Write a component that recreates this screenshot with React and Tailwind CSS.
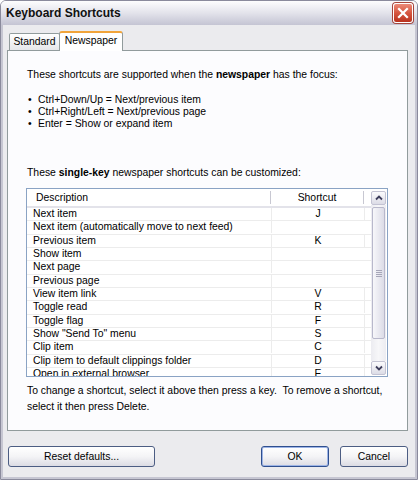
import { useState } from "react";

const rows = [
  ["Next item", "J"],
  ["Next item (automatically move to next feed)", ""],
  ["Previous item", "K"],
  ["Show item", ""],
  ["Next page", ""],
  ["Previous page", ""],
  ["View item link", "V"],
  ["Toggle read", "R"],
  ["Toggle flag", "F"],
  ['Show "Send To" menu', "S"],
  ["Clip item", "C"],
  ["Clip item to default clippings folder", "D"],
  ["Open in external browser", "E"],
];

function CloseButton() {
  return (
    <div className="flex h-[20px] w-[20px] items-center justify-center rounded-[3px] border border-white bg-linear-to-b from-[#ec8a78] via-[#d5553f] to-[#b9311d] shadow-[0_0_0_1px_#a5463c]">
      <svg width="12" height="12" viewBox="0 0 12 12">
        <path d="M2 2 L10 10 M10 2 L2 10" stroke="white" strokeWidth="2.2" strokeLinecap="square" />
      </svg>
    </div>
  );
}

function ScrollButton({ up }) {
  return (
    <div className="flex h-[14px] items-center justify-center rounded-[2px] border border-[#c3c3d3] bg-linear-to-b from-[#fbfbfd] to-[#dcdce6]">
      <svg width="8" height="6" viewBox="0 0 8 6">
        <path
          d={up ? "M1 4.5 L4 1.5 L7 4.5" : "M1 1.5 L4 4.5 L7 1.5"}
          stroke="#3e3e5c"
          strokeWidth="1.8"
          fill="none"
        />
      </svg>
    </div>
  );
}

function Button({ children, className, primary }) {
  return (
    <button
      className={`${className} h-[21px] rounded-[3px] border ${
        primary ? "border-[#2f4f8f] shadow-[inset_0_0_0_1px_#9db4e6]" : "border-[#4c5d83]"
      } bg-linear-to-b from-white via-[#f4f4f6] to-[#dcdce4] text-[10.4px] text-black`}
    >
      {children}
    </button>
  );
}

export default function App() {
  const [tab, setTab] = useState("newspaper");

  return (
    <div className="flex h-[480px] w-[418px] flex-col overflow-hidden rounded-t-[6px] border border-[#8a8a9c] font-['Liberation_Sans',Arial,sans-serif] text-black">
      <div className="flex h-[24px] items-center justify-between bg-linear-to-b from-[#fdfdfe] via-[#e3e3eb] to-[#c4c4d3] pl-[5px] pr-[4px]">
        <span className="text-[12px] font-bold text-[#111]">Keyboard Shortcuts</span>
        <CloseButton />
      </div>

      <div className="flex flex-1 flex-col border-x-[2px] border-b-[2px] border-[#c6c6d2] bg-[#ebebee] pl-[4px] pt-[6px]">
        <div className="flex items-end pl-[2px]">
          <div
            onClick={() => setTab("standard")}
            className="flex h-[17px] w-[51px] items-center justify-center rounded-t-[2px] border border-b-0 border-[#919b9c] bg-linear-to-b from-white to-[#e6e6ea] text-[10.4px]"
          >
            Standard
          </div>
          <div
            onClick={() => setTab("newspaper")}
            className="relative z-10 -mb-px -ml-px flex h-[20px] w-[64px] items-center justify-center rounded-t-[3px] border border-b-0 border-t-[2px] border-[#919b9c] border-t-[#f1a43a] bg-white pb-[2px] text-[10.4px]"
          >
            Newspaper
          </div>
        </div>

        <div className="flex h-[381px] w-[401px] flex-col border border-[#919b9c] bg-[#fcfcfe] px-[19px] pt-[18px] text-[10.4px] leading-[12px]">
          <p>
            These shortcuts are supported when the <b>newspaper</b> has the focus:
          </p>
          <ul className="mt-[13px]">
            <li className="flex"><span className="w-[11px] pl-[1px]">•</span>Ctrl+Down/Up = Next/previous item</li>
            <li className="flex"><span className="w-[11px] pl-[1px]">•</span>Ctrl+Right/Left = Next/previous page</li>
            <li className="flex"><span className="w-[11px] pl-[1px]">•</span>Enter = Show or expand item</li>
          </ul>
          <p className="mt-[37px]">
            These <b>single-key</b> newspaper shortcuts can be customized:
          </p>

          <div className="mt-[9px] flex h-[189px] w-[362px] -ml-px border border-[#8aa3c4] bg-white">
            <div className="flex-1 overflow-hidden">
              <div className="flex h-[19px] items-center border-b-[2px] border-[#e3e3ea] bg-white">
                <div className="w-[243px] pl-[9px]">Description</div>
                <div className="h-[13px] w-px bg-[#c8c8d2]" />
                <div className="w-[92px] text-center">Shortcut</div>
                <div className="h-[13px] w-px bg-[#c8c8d2]" />
              </div>
              {rows.map(([desc, key]) => (
                <div key={desc} className="flex h-[13.33px] items-center border-b border-[#ececec] leading-[12px]">
                  <div className="w-[245px] border-r border-[#ececec] pl-[6px]">{desc}</div>
                  <div className="w-[93px] border-r border-[#ececec] text-center">{key}</div>
                </div>
              ))}
            </div>
            <div className="mb-px mr-px mt-[2px] flex w-[15px] flex-col">
              <ScrollButton up />
              <div className="flex-1 bg-linear-to-r from-[#ececf1] via-[#f7f7f9] to-[#ececf1] px-[1px] pt-[2px]">
                <div className="flex h-[132px] flex-col items-center justify-center gap-[1px] rounded-[2px] border border-[#b8b8cb] bg-linear-to-r from-[#f7f7fa] to-[#dcdce7]">
                  <div className="h-px w-[6px] bg-[#a6a6b8]" />
                  <div className="h-px w-[6px] bg-[#a6a6b8]" />
                  <div className="h-px w-[6px] bg-[#a6a6b8]" />
                  <div className="h-px w-[6px] bg-[#a6a6b8]" />
                </div>
              </div>
              <ScrollButton />
            </div>
          </div>

          <p className="mt-[6px] leading-[16px]">
            To change a shortcut, select it above then press a key.&nbsp; To remove a shortcut, select it then press Delete.
          </p>
        </div>

        <div className="mt-[15px] flex w-[401px] items-center">
          <Button className="ml-px w-[147px]">Reset defaults...</Button>
          <Button primary className="ml-auto w-[68px]">OK</Button>
          <Button className="ml-[11px] w-[68px]">Cancel</Button>
        </div>
      </div>
    </div>
  );
}
